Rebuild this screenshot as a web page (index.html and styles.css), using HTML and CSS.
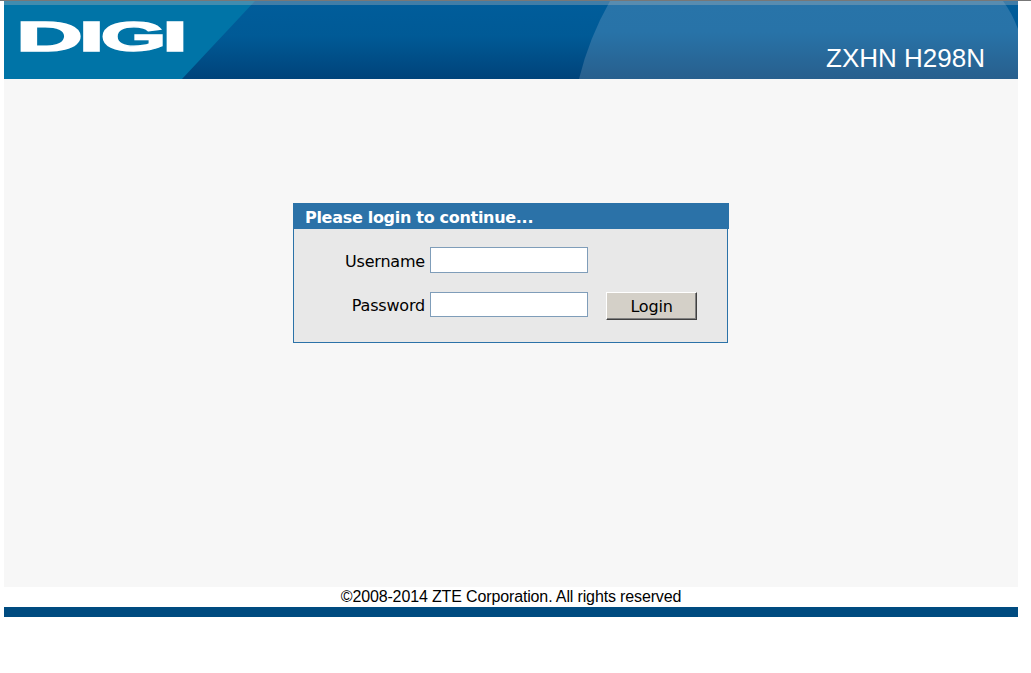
FILE: index.html
```
<!DOCTYPE html>
<html lang="en">
<head>
  <meta charset="UTF-8" />
  <title>ZXHN H298N</title>
  <link rel="stylesheet" href="styles.css">
</head>
<body>
  <div class="page">
    <header class="banner">
      <svg class="banner-bg" viewBox="0 0 1014 78" preserveAspectRatio="none">
        <defs>
          <linearGradient id="dark" x1="0" y1="0" x2="0" y2="1">
            <stop offset="0" stop-color="#005d9b" />
            <stop offset="0.45" stop-color="#005a96" />
            <stop offset="1" stop-color="#00437a" />
          </linearGradient>
          <linearGradient id="light" x1="0" y1="0" x2="0" y2="1">
            <stop offset="0" stop-color="#2874a9" />
            <stop offset="0.4" stop-color="#2873a8" />
            <stop offset="1" stop-color="#285f8d" />
          </linearGradient>
        </defs>
        <rect width="1014" height="78" fill="url(#dark)" />
        <path d="M0 0H251L178 78H0Z" fill="#0074a7" />
        <path d="M606 0Q585 37 575 78H1014V28Q1008 12 999 0Z" fill="url(#light)" />
        <rect width="1014" height="4" fill="#a8b4bd" fill-opacity="0.38" />
      </svg>
      <svg class="logo" viewBox="0 0 200 78">
        <text y="50"><tspan x="12" textLength="67" lengthAdjust="spacingAndGlyphs">D</tspan><tspan x="74.5" textLength="26" lengthAdjust="spacingAndGlyphs">I</tspan><tspan x="96.5" textLength="66" lengthAdjust="spacingAndGlyphs">G</tspan><tspan x="158" textLength="26" lengthAdjust="spacingAndGlyphs">I</tspan></text>
      </svg>
      <span class="model">ZXHN H298N</span>
    </header>

    <main class="content">
      <form class="login">
        <h1>Please login to continue...</h1>
        <div class="fields">
          <label for="username">Username</label>
          <input type="text" id="username" />
          <label for="password" class="row2">Password</label>
          <input type="password" id="password" class="row2" />
          <button type="button" class="row2">Login</button>
        </div>
      </form>
    </main>

    <footer>&copy;2008-2014 ZTE Corporation. All rights reserved</footer>
  </div>
</body>
</html>
```
FILE: styles.css
```
body {
  margin: 0;
  background: #fff;
  border-top: 1px solid #777;
  color: #000;
  font-family: "Liberation Sans", Arial, sans-serif;
}

.page {
  width: 1014px;
  margin-left: 4px;
}

.banner {
  position: relative;
  height: 78px;
  display: flex;
  justify-content: space-between;
  align-items: flex-start;
}

.banner-bg {
  position: absolute;
  top: 0;
  left: 0;
  width: 100%;
  height: 100%;
}

.logo {
  position: relative;
  width: 200px;
  height: 78px;
  overflow: visible;
  fill: #fff;
  stroke: #fff;
  stroke-width: 1.4px;
  font-weight: bold;
  font-size: 42px;
}

.model {
  position: relative;
  margin: 42px 33px 0 0;
  color: #fff;
  font-size: 26px;
  line-height: 30px;
}

.content {
  height: 508px;
  background: #f7f7f7;
  overflow: hidden;
}

.login {
  width: 436px;
  margin: 124px 0 0 289px;
  font-family: "DejaVu Sans", Verdana, sans-serif;
  font-size: 16px;
  letter-spacing: -0.2px;
}

.login h1 {
  height: 26px;
  margin: 0;
  padding-left: 12px;
  background: #2b72a8;
  color: #fff;
  font-size: 16px;
  letter-spacing: -0.3px;
  line-height: 30px;
}

.fields {
  box-sizing: border-box;
  width: 435px;
  height: 114px;
  padding-top: 18px;
  border: 1px solid #2b72a8;
  border-top: none;
  background: #e8e8e8;
  display: grid;
  grid-template-columns: 131px 163px 109px;
  grid-template-rows: 26px 28px;
  row-gap: 19px;
  justify-content: start;
  align-items: start;
}

.fields label {
  text-align: right;
  line-height: 29px;
}

.fields label.row2 {
  line-height: 27px;
}

.fields input {
  box-sizing: border-box;
  width: 158px;
  height: 26px;
  margin: 0 0 0 5px;
  padding: 2px;
  border: 1px solid #7f9db9;
  background: #fff;
}

.fields input.row2 {
  height: 25px;
}

.fields .row2 {
  grid-row: 2;
}

.fields button {
  width: 91px;
  height: 28px;
  margin: 0 0 0 18px;
  padding: 1px 0 0;
  border: 1px solid;
  border-color: #fff #404040 #404040 #fff;
  box-shadow: inset -1px -1px #808080;
  background: #d4d0c8;
  color: #000;
  font: inherit;
  letter-spacing: inherit;
}

footer {
  height: 20px;
  border-bottom: 10px solid #004b80;
  text-align: center;
  font-size: 16px;
  letter-spacing: -0.14px;
  line-height: 19px;
}
```
